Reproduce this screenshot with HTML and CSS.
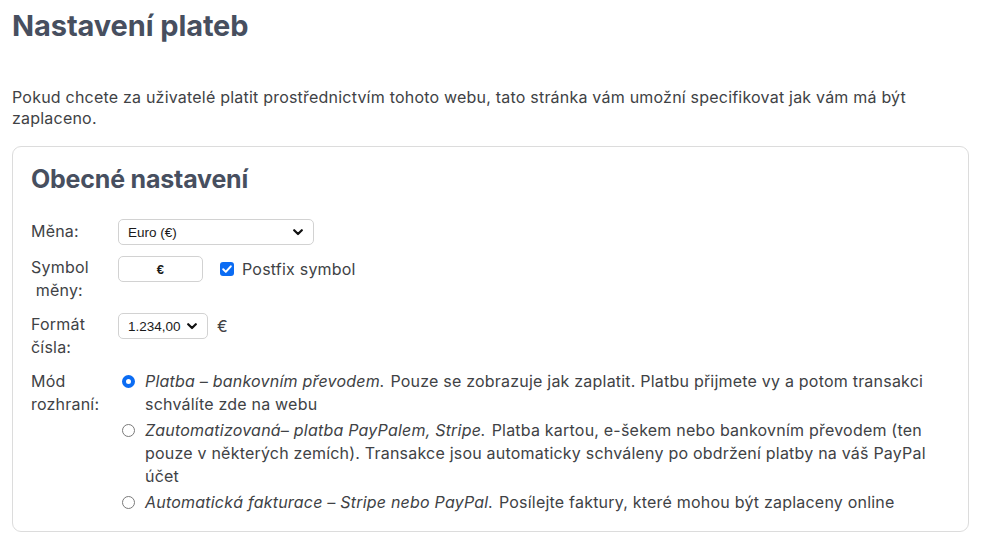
FILE: index.html
```html
<!DOCTYPE html>
<html lang="cs">
<head>
<meta charset="utf-8">
<title>Nastavení plateb</title>
<link rel="stylesheet" href="styles.css">
</head>
<body>
<h1 class="page-title">Nastavení plateb</h1>
<p class="intro">Pokud chcete za uživatelé platit prostřednictvím tohoto webu, tato stránka vám umožní specifikovat jak vám má být zaplaceno.</p>

<section class="card">
  <h2 class="card-title">Obecné nastavení</h2>
  <div class="form-grid">
    <div class="label label-single">Měna:</div>
    <div class="control">
      <span class="select select-wide">
        <span class="select-text">Euro (€)</span>
        <svg class="chev" viewBox="0 0 10 7" width="10" height="7"><path d="M1.2 1.2 L5 5 L8.8 1.2" fill="none" stroke="#111" stroke-width="2.2" stroke-linecap="round" stroke-linejoin="round"/></svg>
      </span>
    </div>

    <div class="label">Symbol<br>&nbsp;měny:</div>
    <div class="control row">
      <span class="text-input">€</span>
      <label class="check">
        <span class="checkbox"><svg viewBox="0 0 14 14" width="14" height="14"><path d="M3.2 7.3 L5.8 9.9 L10.8 4.3" fill="none" stroke="#fff" stroke-width="2" stroke-linecap="round" stroke-linejoin="round"/></svg></span>
        Postfix symbol
      </label>
    </div>

    <div class="label">Formát<br>čísla:</div>
    <div class="control row">
      <span class="select select-narrow">
        <span class="select-text">1.234,00</span>
        <svg class="chev" viewBox="0 0 10 7" width="10" height="7"><path d="M1.2 1.2 L5 5 L8.8 1.2" fill="none" stroke="#111" stroke-width="2.2" stroke-linecap="round" stroke-linejoin="round"/></svg>
      </span>
      <span class="suffix">€</span>
    </div>

    <div class="label label-mode">Mód<br>rozhraní:</div>
    <div class="control options">
      <div class="option">
        <span class="radio checked"></span>
        <span class="option-text"><em>Platba – bankovním převodem.</em> Pouze se zobrazuje jak zaplatit. Platbu přijmete vy a potom transakci schválíte zde na webu</span>
      </div>
      <div class="option">
        <span class="radio"></span>
        <span class="option-text"><em>Zautomatizovaná– platba PayPalem, Stripe.</em> Platba kartou, e-šekem nebo bankovním převodem (ten pouze v některých zemích). Transakce jsou automaticky schváleny po obdržení platby na váš PayPal účet</span>
      </div>
      <div class="option">
        <span class="radio"></span>
        <span class="option-text"><em>Automatická fakturace – Stripe nebo PayPal.</em> Posílejte faktury, které mohou být zaplaceny online</span>
      </div>
    </div>
  </div>
</section>
</body>
</html>
```

FILE: styles.css
```css
* { box-sizing: border-box; }

html, body {
  background: #ffffff;
}

body {
  margin: 0;
  padding: 0 15px 0 12px;
  font-family: Inter, "Noto Sans", "Liberation Sans", sans-serif;
  font-size: 16px;
  letter-spacing: 0.21px;
  color: #404245;
}

.page-title {
  margin: 8px 0 0;
  font-size: 29px;
  line-height: 36px;
  font-weight: 700;
  color: #474f5f;
  letter-spacing: -0.1px;
}

.intro {
  margin: 43px 0 17px;
  line-height: 21px;
  padding-right: 40px;
}

.card {
  border: 1px solid #dcdcdc;
  border-radius: 9px;
  padding: 16px 18px 17px;
}

.card-title {
  margin: 0 0 24px;
  font-size: 25px;
  line-height: 32px;
  font-weight: 700;
  color: #474f5f;
  letter-spacing: -0.2px;
}

.form-grid {
  display: grid;
  grid-template-columns: 87px 1fr;
  row-gap: 11px;
  align-items: start;
}

.label {
  line-height: 23px;
  padding-top: 0;
}

.label-single {
  padding-top: 1px;
}

.label-mode {
  padding-top: 0;
}

.control.row {
  display: flex;
  align-items: center;
  height: 26px;
}

.select {
  position: relative;
  display: inline-flex;
  align-items: center;
  height: 26px;
  border: 1px solid #d2d2d2;
  border-radius: 5px;
  background: #fff;
  font-family: "Liberation Sans", Arial, sans-serif;
  font-size: 13.5px;
  letter-spacing: 0;
  color: #1a1a1a;
  padding: 0 10px 0 9px;
  justify-content: space-between;
}

.select-wide { width: 196px; }
.select-narrow { width: 90px; }

.select-text {
  white-space: nowrap;
}

.chev {
  display: block;
  flex: none;
}

.text-input {
  display: inline-flex;
  align-items: center;
  justify-content: center;
  width: 85px;
  height: 26px;
  border: 1px solid #d2d2d2;
  border-radius: 5px;
  font-family: "Liberation Sans", Arial, sans-serif;
  font-size: 13px;
  font-weight: 700;
  color: #1a1a1a;
}

.check {
  display: inline-flex;
  align-items: center;
  margin-left: 17px;
  gap: 8px;
}

.checkbox {
  display: inline-flex;
  width: 14px;
  height: 14px;
  border-radius: 3px;
  background: #0b6cf3;
}

.suffix {
  margin-left: 9px;
}

.options {
  display: flex;
  flex-direction: column;
  gap: 3px;
  padding-top: 0;
}

.option {
  display: flex;
  align-items: flex-start;
  line-height: 23px;
}

.radio {
  flex: none;
  width: 13px;
  height: 13px;
  margin: 5px 10px 0 4px;
  border-radius: 50%;
  border: 1px solid #7a7a7a;
  background: #fff;
}

.radio.checked {
  border: 4px solid #0b6cf3;
  background: #fff;
}

.option-text em {
  font-style: italic;
  padding-right: 1px;
}
```
